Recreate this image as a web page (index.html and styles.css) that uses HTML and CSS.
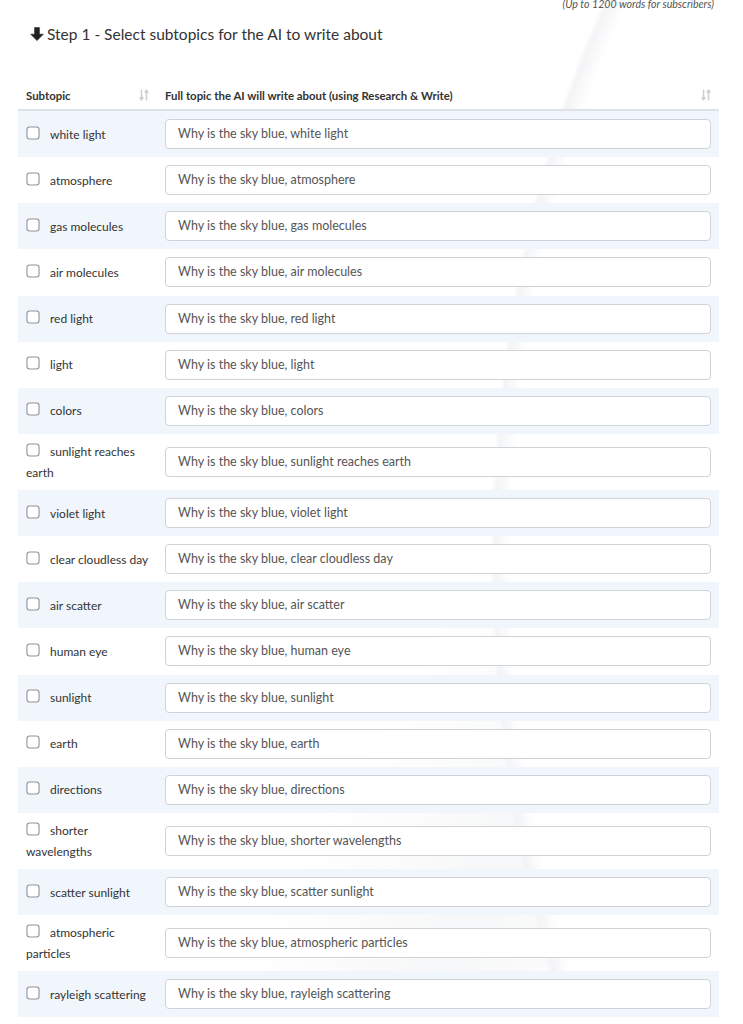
FILE: index.html
```html
<!DOCTYPE html>
<html lang="en">
<head>
<meta charset="utf-8">
<title>Step 1 - Select subtopics</title>
<link rel="stylesheet" href="styles.css">
</head>
<body>
<div class="page">
  <p class="note">(Up to 1200 words for subscribers)</p>
  <h2 class="step">
    <svg class="step-arrow" viewBox="0 0 14 14" width="14" height="14" aria-hidden="true"><path d="M4.6 0.6h4.8v6.6h3.9L7 13.6 0.7 7.2h3.9z" fill="#222" stroke="#222" stroke-width="0.6" stroke-linejoin="round"/></svg>
    Step 1 - Select subtopics for the AI to write about
  </h2>
  <table class="topics">
    <colgroup><col class="c1"><col class="c2"></colgroup>
    <thead>
      <tr>
        <th><div class="th-in"><span>Subtopic</span><svg class="sort" viewBox="0 0 10 12" width="10" height="12"><path d="M2.5 0.5v10M0.7 8.2l1.8 2.6 1.8-2.6M7.5 11.5V1.5M5.7 3.8L7.5 1.2l1.8 2.6" stroke="#cfcfcf" stroke-width="1.5" fill="none"/></svg></div></th>
        <th><div class="th-in"><span>Full topic the AI will write about (using Research &amp; Write)</span><svg class="sort" viewBox="0 0 10 12" width="10" height="12"><path d="M2.5 0.5v10M0.7 8.2l1.8 2.6 1.8-2.6M7.5 11.5V1.5M5.7 3.8L7.5 1.2l1.8 2.6" stroke="#cfcfcf" stroke-width="1.5" fill="none"/></svg></div></th>
      </tr>
    </thead>
    <tbody>
      <tr><td class="sub"><span class="cb"></span>white light</td><td class="inp"><div class="field">Why is the sky blue, white light</div></td></tr>
      <tr><td class="sub"><span class="cb"></span>atmosphere</td><td class="inp"><div class="field">Why is the sky blue, atmosphere</div></td></tr>
      <tr><td class="sub"><span class="cb"></span>gas molecules</td><td class="inp"><div class="field">Why is the sky blue, gas molecules</div></td></tr>
      <tr><td class="sub"><span class="cb"></span>air molecules</td><td class="inp"><div class="field">Why is the sky blue, air molecules</div></td></tr>
      <tr><td class="sub"><span class="cb"></span>red light</td><td class="inp"><div class="field">Why is the sky blue, red light</div></td></tr>
      <tr><td class="sub"><span class="cb"></span>light</td><td class="inp"><div class="field">Why is the sky blue, light</div></td></tr>
      <tr><td class="sub"><span class="cb"></span>colors</td><td class="inp"><div class="field">Why is the sky blue, colors</div></td></tr>
      <tr><td class="sub"><span class="cb"></span>sunlight reaches earth</td><td class="inp"><div class="field">Why is the sky blue, sunlight reaches earth</div></td></tr>
      <tr><td class="sub"><span class="cb"></span>violet light</td><td class="inp"><div class="field">Why is the sky blue, violet light</div></td></tr>
      <tr><td class="sub"><span class="cb"></span>clear cloudless day</td><td class="inp"><div class="field">Why is the sky blue, clear cloudless day</div></td></tr>
      <tr><td class="sub"><span class="cb"></span>air scatter</td><td class="inp"><div class="field">Why is the sky blue, air scatter</div></td></tr>
      <tr><td class="sub"><span class="cb"></span>human eye</td><td class="inp"><div class="field">Why is the sky blue, human eye</div></td></tr>
      <tr><td class="sub"><span class="cb"></span>sunlight</td><td class="inp"><div class="field">Why is the sky blue, sunlight</div></td></tr>
      <tr><td class="sub"><span class="cb"></span>earth</td><td class="inp"><div class="field">Why is the sky blue, earth</div></td></tr>
      <tr><td class="sub"><span class="cb"></span>directions</td><td class="inp"><div class="field">Why is the sky blue, directions</div></td></tr>
      <tr><td class="sub"><span class="cb"></span>shorter wavelengths</td><td class="inp"><div class="field">Why is the sky blue, shorter wavelengths</div></td></tr>
      <tr><td class="sub"><span class="cb"></span>scatter sunlight</td><td class="inp"><div class="field">Why is the sky blue, scatter sunlight</div></td></tr>
      <tr><td class="sub"><span class="cb"></span>atmospheric particles</td><td class="inp"><div class="field">Why is the sky blue, atmospheric particles</div></td></tr>
      <tr><td class="sub"><span class="cb"></span>rayleigh scattering</td><td class="inp"><div class="field">Why is the sky blue, rayleigh scattering</div></td></tr>
    </tbody>
  </table>
</div>
</body>
</html>
```
FILE: styles.css
```css
html, body {
  margin: 0;
  padding: 0;
}
body {
  font-family: Lato, "Open Sans", Arial, sans-serif;
  color: #333;
  background-color: #fff;
  background-image:
    radial-gradient(ellipse 520px 900px at 1010px 560px, #ffffff 0 96%, #f3f4f6 99%, rgba(255,255,255,0) 100%),
    linear-gradient(120deg, rgba(255,255,255,0) 60%, #f6f7f8 75%, rgba(255,255,255,0) 90%);
  background-repeat: no-repeat;
}
.page {
  padding: 0 24px 0 18px;
}
.note {
  margin: -2px 5px 0 0;
  text-align: right;
  font-size: 10.6px;
  font-style: italic;
  color: #555;
  line-height: 12px;
}
.step {
  margin: 14px 0 0 12px;
  font-size: 15.5px;
  font-weight: 400;
  color: #333;
  line-height: 20px;
  display: flex;
  align-items: center;
  gap: 3px;
}
.step-arrow {
  flex: none;
}
.topics {
  margin-top: 37px;
  width: 701px;
  border-collapse: collapse;
  table-layout: fixed;
}
.c1 { width: 139px; }
.c2 { width: 562px; }
.topics th {
  text-align: left;
  font-size: 11.4px;
  font-weight: 700;
  color: #333;
  padding: 8px;
  border-bottom: 2px solid #dfe2e5;
}
.th-in {
  display: flex;
  align-items: center;
  justify-content: space-between;
  height: 12px;
}
.sort {
  flex: none;
  margin-right: 0;
}
.topics tbody tr:nth-child(odd) {
  background: #f0f6fc;
}
.topics td {
  vertical-align: middle;
}
.inp {
  padding: 8px 8px 8.15px;
}
.sub {
  padding: 7px 8px;
  font-size: 12px;
  line-height: 21px;
  color: #333;
}
.cb {
  display: inline-block;
  width: 10px;
  height: 10px;
  border: 1.5px solid #919398;
  border-radius: 3px;
  background: #fff;
  margin: 0 11px 0 1px;
  vertical-align: 0;
  transform: scale(1.1);
}
.field {
  height: 30px;
  box-sizing: border-box;
  border: 1px solid #cfd2d6;
  border-radius: 4px;
  background: #fff;
  padding: 0 12px;
  font-size: 12.5px;
  line-height: 28px;
  color: #555;
  white-space: nowrap;
  overflow: hidden;
}
```
